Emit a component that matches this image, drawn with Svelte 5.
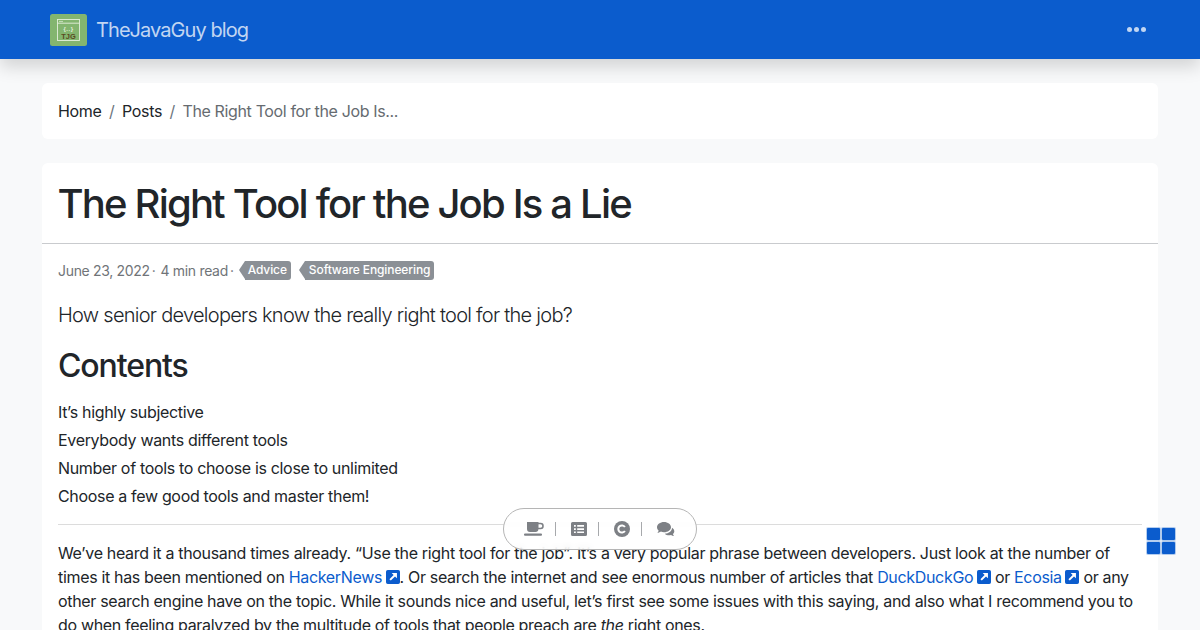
<script>
  const contents = [
    "It’s highly subjective",
    "Everybody wants different tools",
    "Number of tools to choose is close to unlimited",
    "Choose a few good tools and master them!"
  ];
</script>

{#snippet ext()}
  <svg class="ext" viewBox="0 0 16 16" aria-hidden="true"><path fill-rule="evenodd" d="M2 0h12a2 2 0 0 1 2 2v12a2 2 0 0 1-2 2H2a2 2 0 0 1-2-2V2a2 2 0 0 1 2-2zm4.500 3.500h6v6l-2.200-2.200-4.800 4.800-1.600-1.600 4.800-4.800z"/></svg>
{/snippet}

<div class="page">
  <nav class="navbar">
    <div class="brand">
      <svg class="logo" viewBox="0 0 37 32" aria-hidden="true">
        <rect width="37" height="32" rx="2.5" fill="#83b56f"/>
        <rect x="7.5" y="5.5" width="22" height="21" fill="none" stroke="#e4efdc" stroke-width="0.9"/>
        <path d="M7.5 9.2h22" stroke="#e4efdc" stroke-width="0.9"/>
        <path d="M9 7.4h4" stroke="#e4efdc" stroke-width="0.7"/>
        <text x="18.5" y="17" class="logo-braces">{"{..}"}</text>
        <text x="18.5" y="25" class="logo-tjg">TJG</text>
      </svg>
      <span>TheJavaGuy blog</span>
    </div>
    <div class="dots"><i></i><i></i><i></i></div>
  </nav>

  <main class="container">
    <div class="card crumbs">
      <span class="link">Home</span><span class="sep">/</span><span class="link">Posts</span><span class="sep">/</span><span class="active">The Right Tool for the Job Is...</span>
    </div>

    <article class="card post">
      <header class="post-head"><h1>The Right Tool for the Job Is a Lie</h1></header>
      <div class="post-body">
        <div class="meta">
          <span>June 23, 2022</span><span class="dot">·</span><span>4 min read</span><span class="dot">·</span>
          <span class="tag">Advice</span>
          <span class="tag tag2">Software Engineering</span>
        </div>
        <p class="lead">How senior developers know the really right tool for the job?</p>
        <h2>Contents</h2>
        <ul class="toc">
          {#each contents as item}<li>{item}</li>{/each}
        </ul>
        <hr />
        <p class="text">We’ve heard it a thousand times already. “Use the right tool for the job”. It’s a very popular phrase between developers. Just look at the number of times it has been mentioned on <a href="#a">HackerNews</a>{@render ext()}. Or search the internet and see enormous number of articles that <a href="#a">DuckDuckGo</a>{@render ext()} or <a href="#a">Ecosia</a>{@render ext()} or any other search engine have on the topic. While it sounds nice and useful, let’s first see some issues with this saying, and also what I recommend you to do when feeling paralyzed by the multitude of tools that people preach are <em>the</em> right ones.</p>
      </div>
    </article>
  </main>

  <div class="pill">
    <svg class="i-cup" viewBox="0 0 20 14" aria-hidden="true"><path fill-rule="evenodd" d="M3 0h11.500v.8h2A3.200 3.200 0 0 1 19.800 4a3.200 3.200 0 0 1-3.300 3.200h-2.100A3 3 0 0 1 11.500 10H6a3 3 0 0 1-3-3zm11.500 2.200v3.500h2a1.750 1.750 0 0 0 0-3.500z"/><rect x="0" y="11.500" width="18" height="2.200" rx="1"/></svg>
    <b></b>
    <svg class="i-list" viewBox="0 0 16 14" aria-hidden="true"><path fill-rule="evenodd" d="M1.500 0h13A1.500 1.500 0 0 1 16 1.500v11a1.500 1.500 0 0 1-1.500 1.500h-13A1.500 1.500 0 0 1 0 12.500v-11A1.500 1.500 0 0 1 1.500 0zM3 3v1.700h1.800V3zm3.200 0v1.700H13V3zM3 6.200v1.700h1.800V6.200zm3.200 0v1.700H13V6.200zM3 9.400v1.700h1.800V9.400zm3.200 0v1.700H13V9.400z"/></svg>
    <b></b>
    <svg class="i-c" viewBox="0 0 16 16" aria-hidden="true"><circle cx="8" cy="8" r="8"/><path d="M10.900 6a3.600 3.600 0 1 0 0 4" fill="none" stroke="#fff" stroke-width="2"/></svg>
    <b></b>
    <svg class="i-chat" viewBox="0 0 18 15" aria-hidden="true"><path d="M7 0C3.100 0 0 2.300 0 5.200c0 1.300.6 2.500 1.700 3.400-.2.900-.7 1.600-1.300 2.300 1.300-.1 2.600-.6 3.500-1.300 1 .4 2 .6 3.100.6 3.900 0 7-2.300 7-5S10.900 0 7 0z"/><path d="M15 5.800c.1 3.300-3.200 5.800-7.200 5.900 1 1 2.500 1.500 4.200 1.500.7 0 1.400-.1 2-.3.800.6 1.900 1 3 1.100-.5-.6-.9-1.200-1.100-1.900.9-.7 1.400-1.700 1.400-2.800 0-1.400-.9-2.700-2.300-3.500z"/></svg>
  </div>

  <div class="grid-btn"><i></i><i></i><i></i><i></i></div>
</div>

<style>
  :global(body) { margin: 0; background: #f8f9fa; }
  .page {
    position: relative;
    height: 630px;
    overflow: hidden;
    font-family: Inter, "Liberation Sans", sans-serif;
    font-size: 16px;
    line-height: 24px;
    letter-spacing: -0.33px;
    color: #212529;
    background: #f8f9fa;
  }
  .navbar {
    height: 59px;
    background: #0b5ccd;
    box-shadow: 0 8px 16px rgba(0, 0, 0, 0.15);
    display: flex;
    align-items: center;
    justify-content: space-between;
    padding: 0 54px 0 50px;
    position: relative;
  }
  .brand { display: flex; align-items: center; gap: 9px; color: rgba(255,255,255,.75); font-size: 20px; letter-spacing: -0.93px; }
  .logo { width: 37px; height: 32px; display: block; }
  .logo-braces { font: 700 6px "Liberation Sans", sans-serif; fill: #e4efdc; text-anchor: middle; letter-spacing: 0.5px; }
  .logo-tjg { font: 700 7.500px "Liberation Sans", sans-serif; fill: #5a4a22; text-anchor: middle; letter-spacing: 0; }
  .dots { display: flex; gap: 2px; }
  .dots i { width: 5px; height: 5px; border-radius: 50%; background: rgba(255,255,255,.75); }
  .container { padding: 24px 42px 0; display: flex; flex-direction: column; gap: 24px; }
  .card { background: #fff; border-radius: 6px; }
  .crumbs { height: 56px; padding: 0 16px; display: flex; align-items: center; }
  .link { color: #212529; }
  .sep { color: #6c757d; padding: 0 7.500px; }
  .active { color: #666b70; letter-spacing: -0.36px; }
  .post-head { border-bottom: 1px solid #c9cbce; padding: 0 15.500px; display: flex; align-items: center; box-sizing: border-box; height: 81px; }
  h1 { margin: 2px 0 0; font-size: 40px; font-weight: 500; line-height: 1.2; letter-spacing: -1.82px; }
  .post-body { padding: 16px; }
  .meta { display: flex; align-items: center; font-size: 14px; color: #707478; height: 21px; letter-spacing: -0.32px; }
  .dot { padding: 0 5px 0 2px; }
  .tag {
    position: relative;
    margin-left: 6px;
    background: #8b9096;
    color: #fff;
    font-size: 12px;
    font-weight: 500;
    letter-spacing: -0.1px;
    line-height: 18px;
    height: 19px;
    padding: 0 4px 0 3px;
    border-radius: 0 3px 3px 0;
  }
  .tag::before {
    content: "";
    position: absolute;
    left: -6px;
    top: 0;
    border-style: solid;
    border-width: 9.500px 6px 9.500px 0;
    border-color: transparent #8b9096 transparent transparent;
  }
  .tag2 { margin-left: 14px; padding-left: 4px; }
  .lead { margin: 19px 0 0; font-size: 20px; line-height: 30px; font-weight: 300; letter-spacing: -0.73px; color: #212529; }
  h2 { margin: 17px 0 0; font-size: 32px; font-weight: 500; line-height: 38.4px; letter-spacing: -1.1px; }
  .toc { list-style: none; margin: 12.600px 0 0; padding: 0; }
  .toc li { height: 28px; line-height: 28px; }
  hr { border: 0; border-top: 1px solid #dcdcdc; margin: 14px 0 16px; }
  .text { margin: 0; }
  a { color: #0b5ccd; text-decoration: none; }
  .ext { width: 14px; height: 14px; fill: #0b5ccd; margin-left: 3.500px; vertical-align: -1px; }
  .pill {
    position: absolute;
    left: 503px;
    top: 508px;
    width: 194px;
    height: 42px;
    box-sizing: border-box;
    border: 1px solid #b5b5b5;
    border-radius: 21px;
    background: rgba(255,255,255,.8);
    backdrop-filter: blur(3px);
    display: flex;
    align-items: center;
    padding-left: 20px;
  }
  .pill svg { fill: #7d8085; display: block; }
  .pill b { width: 1px; height: 14px; background: #a7a9ac; margin: 0 15.500px 0 10.500px; flex: none; }
  .pill svg { flex: none; }
  .i-cup { width: 20px; height: 14px; }
  .i-list { width: 16px; height: 14px; }
  .i-c { width: 16px; height: 16px; }
  .i-chat { width: 18px; height: 15px; }
  .grid-btn {
    position: absolute;
    left: 1147px;
    top: 528px;
    display: grid;
    grid-template-columns: 13px 13px;
    grid-auto-rows: 12px;
    gap: 2px;
  }
  .grid-btn i { background: #0b5ccd; border-radius: 1px; box-shadow: 0 0 0 1px rgba(11,92,205,.3); }
</style>
